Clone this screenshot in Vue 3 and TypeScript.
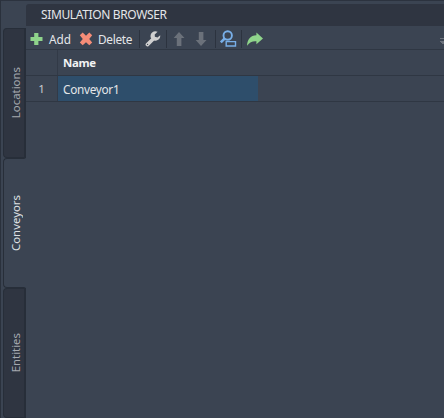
<script setup lang="ts">
import { ref } from 'vue'

interface Item {
  id: number
  name: string
}

const tabs: string[] = ['Locations', 'Conveyors', 'Entities']
const active = ref<string>('Conveyors')
const items = ref<Item[]>([{ id: 1, name: 'Conveyor1' }])
</script>

<template>
  <div class="window">
    <nav class="tabs">
      <button
        v-for="tab in tabs"
        :key="tab"
        class="tab"
        :class="{ active: tab === active }"
        @click="active = tab"
      >
        <span>{{ tab }}</span>
      </button>
    </nav>
    <main class="panel">
      <header class="title"><span>SIMULATION BROWSER</span></header>
      <div class="toolbar">
        <svg class="icon add" width="14" height="14" viewBox="0 0 14 14">
          <path d="M5.200 1h4.200v3.900H13.500v4.200H9.400v4H5.200v-4H1.500V4.900h3.700z" fill="#8fd48b" />
        </svg>
        <span class="label add-label">Add</span>
        <svg class="icon delete" width="14" height="14" viewBox="0 0 14 14">
          <path d="M3.700 .6 7 3.700 10.300 .6 13.200 3.300 10.200 6.900 13.200 10.500 10.300 13.300 7 10.200 3.700 13.300 .8 10.500 3.800 6.900 .8 3.300z" fill="#f68d78" />
        </svg>
        <span class="label delete-label">Delete</span>
        <i class="sep"></i>
        <svg class="icon wrench" width="16" height="16" viewBox="0 0 16 16">
          <path d="M2.400 13.600 8.400 7.700" stroke="#cfcfcf" stroke-width="3.600" stroke-linecap="round" />
          <path d="M12.600 .7A4.900 4.900 0 0 0 5.900 6.900 4.900 4.900 0 0 0 15.200 4.300L12.500 6.500 9.900 5.800 9.700 3.400z" fill="#cfcfcf" />
          <circle cx="2.600" cy="13.400" r=".6" fill="#3b4452" />
        </svg>
        <i class="sep second"></i>
        <svg class="icon up" width="12" height="16" viewBox="0 0 12 16">
          <path d="M6 1 11.500 7H8.400V15H3.800V7H.7z" fill="#6b717a" />
        </svg>
        <svg class="icon down" width="12" height="16" viewBox="0 0 12 16">
          <path d="M6 15 11.500 9H8.400V1H3.800V9H.7z" fill="#6b717a" />
        </svg>
        <i class="sep third"></i>
        <svg class="icon find" width="18" height="18" viewBox="0 0 18 18" fill="none" stroke="#78afe8">
          <circle cx="8.700" cy="5.500" r="4.200" stroke-width="1.900" />
          <path d="M5.700 8.500 1.800 12.400" stroke-width="2.500" />
          <path d="M7.200 11.600h9.300v4.400H7.200z" stroke-width="1.400" />
        </svg>
        <i class="sep fourth"></i>
        <svg class="icon share" width="18" height="16" viewBox="0 0 18 16">
          <path d="M10.400 1.400 17 7.400 10.400 13.200V10.200C6.500 9.900 3.700 11 1 14.700 1.300 8.500 4.400 4.400 10.400 4.200z" fill="#8fd48b" />
        </svg>
        <svg class="overflow" width="4" height="6" viewBox="0 0 4 6">
          <path d="M0 .5h4M0 3.500h4M1 4.500h3M2 5.500h2" stroke="#6c727c" />
        </svg>
      </div>
      <div class="grid head">
        <span class="num"></span>
        <span class="cell"><b>Name</b></span>
      </div>
      <div v-for="item in items" :key="item.id" class="grid row">
        <span class="num">{{ item.id }}</span>
        <span class="cell"><span>{{ item.name }}</span></span>
      </div>
    </main>
  </div>
</template>

<style>
body {
  overflow: hidden;
  background: #3b4452;
}
</style>

<style scoped>
* {
  box-sizing: border-box;
}
.window {
  display: flex;
  width: 444px;
  height: 418px;
  border-top: 1px solid #2c333f;
  border-left: 1px solid #2a313c;
  background: #3b4452;
  color: #e4e6e9;
  font: 12px/16px "Noto Sans", "Open Sans", sans-serif;
}
.tabs {
  width: 25px;
  padding: 27px 0 0 2px;
  flex: none;
}
.tab {
  display: flex;
  align-items: center;
  justify-content: center;
  width: 23px;
  height: 130px;
  margin: 0;
  padding: 0 0 0 3px;
  border: 1px solid #272e39;
  border-right-width: 2px;
  border-radius: 4px 0 0 4px;
  background: #2f3541;
  color: #a5a9af;
  font: inherit;
}
.tab.active {
  border-right-color: transparent;
  background: #3b4452;
  color: #dfe1e4;
}
.tab span {
  writing-mode: vertical-rl;
  transform: rotate(180deg);
  font-size: 11.4px;
}
.panel {
  flex: 1;
  min-width: 0;
  padding-top: 3px;
}
.title {
  height: 22px;
  padding: 3px 0 0 15px;
  border-radius: 3px 0 0 0;
  background: #2f3541;
  font-size: 12px;
  letter-spacing: -0.36px;
  white-space: nowrap;
}
.toolbar {
  display: flex;
  align-items: center;
  height: 24px;
  padding: 2px 0 0 3px;
  border-bottom: 1px solid #2f3743;
}
.icon {
  flex: none;
}
.label {
  flex: none;
  font-size: 11.8px;
}
.add-label {
  width: 24px;
  margin-left: 6px;
}
.delete {
  margin-left: 6px;
}
.delete-label {
  width: 36px;
  margin-left: 5px;
  letter-spacing: -0.3px;
}
.sep {
  flex: none;
  width: 1px;
  height: 18px;
  margin-left: 5px;
  background: #2c333f;
}
.third {
  margin-left: 8px;
}
.fourth {
  margin-left: 4px;
}
.wrench {
  margin-left: 5px;
}
.up {
  margin-left: 6px;
}
.down {
  margin-left: 10px;
}
.find {
  margin-left: 3px;
}
.share {
  margin-left: 4px;
}
.overflow {
  margin: 5px 0 0 auto;
}
.grid {
  display: grid;
  grid-template-columns: 32px 200px;
  height: 26px;
  border-bottom: 1px solid #2f3743;
}
.num {
  display: flex;
  align-items: center;
  justify-content: center;
  border-right: 1px solid #323a47;
  color: #c8cbd0;
  font-size: 11.5px;
}
.cell {
  display: flex;
  align-items: center;
  padding: 1px 0 0 5px;
}
.head .cell {
  color: #f2f3f4;
  font-size: 11.4px;
  letter-spacing: -0.35px;
}
.row .cell {
  background: #2e4e6b;
  font-size: 11.8px;
  letter-spacing: -0.3px;
}
</style>
